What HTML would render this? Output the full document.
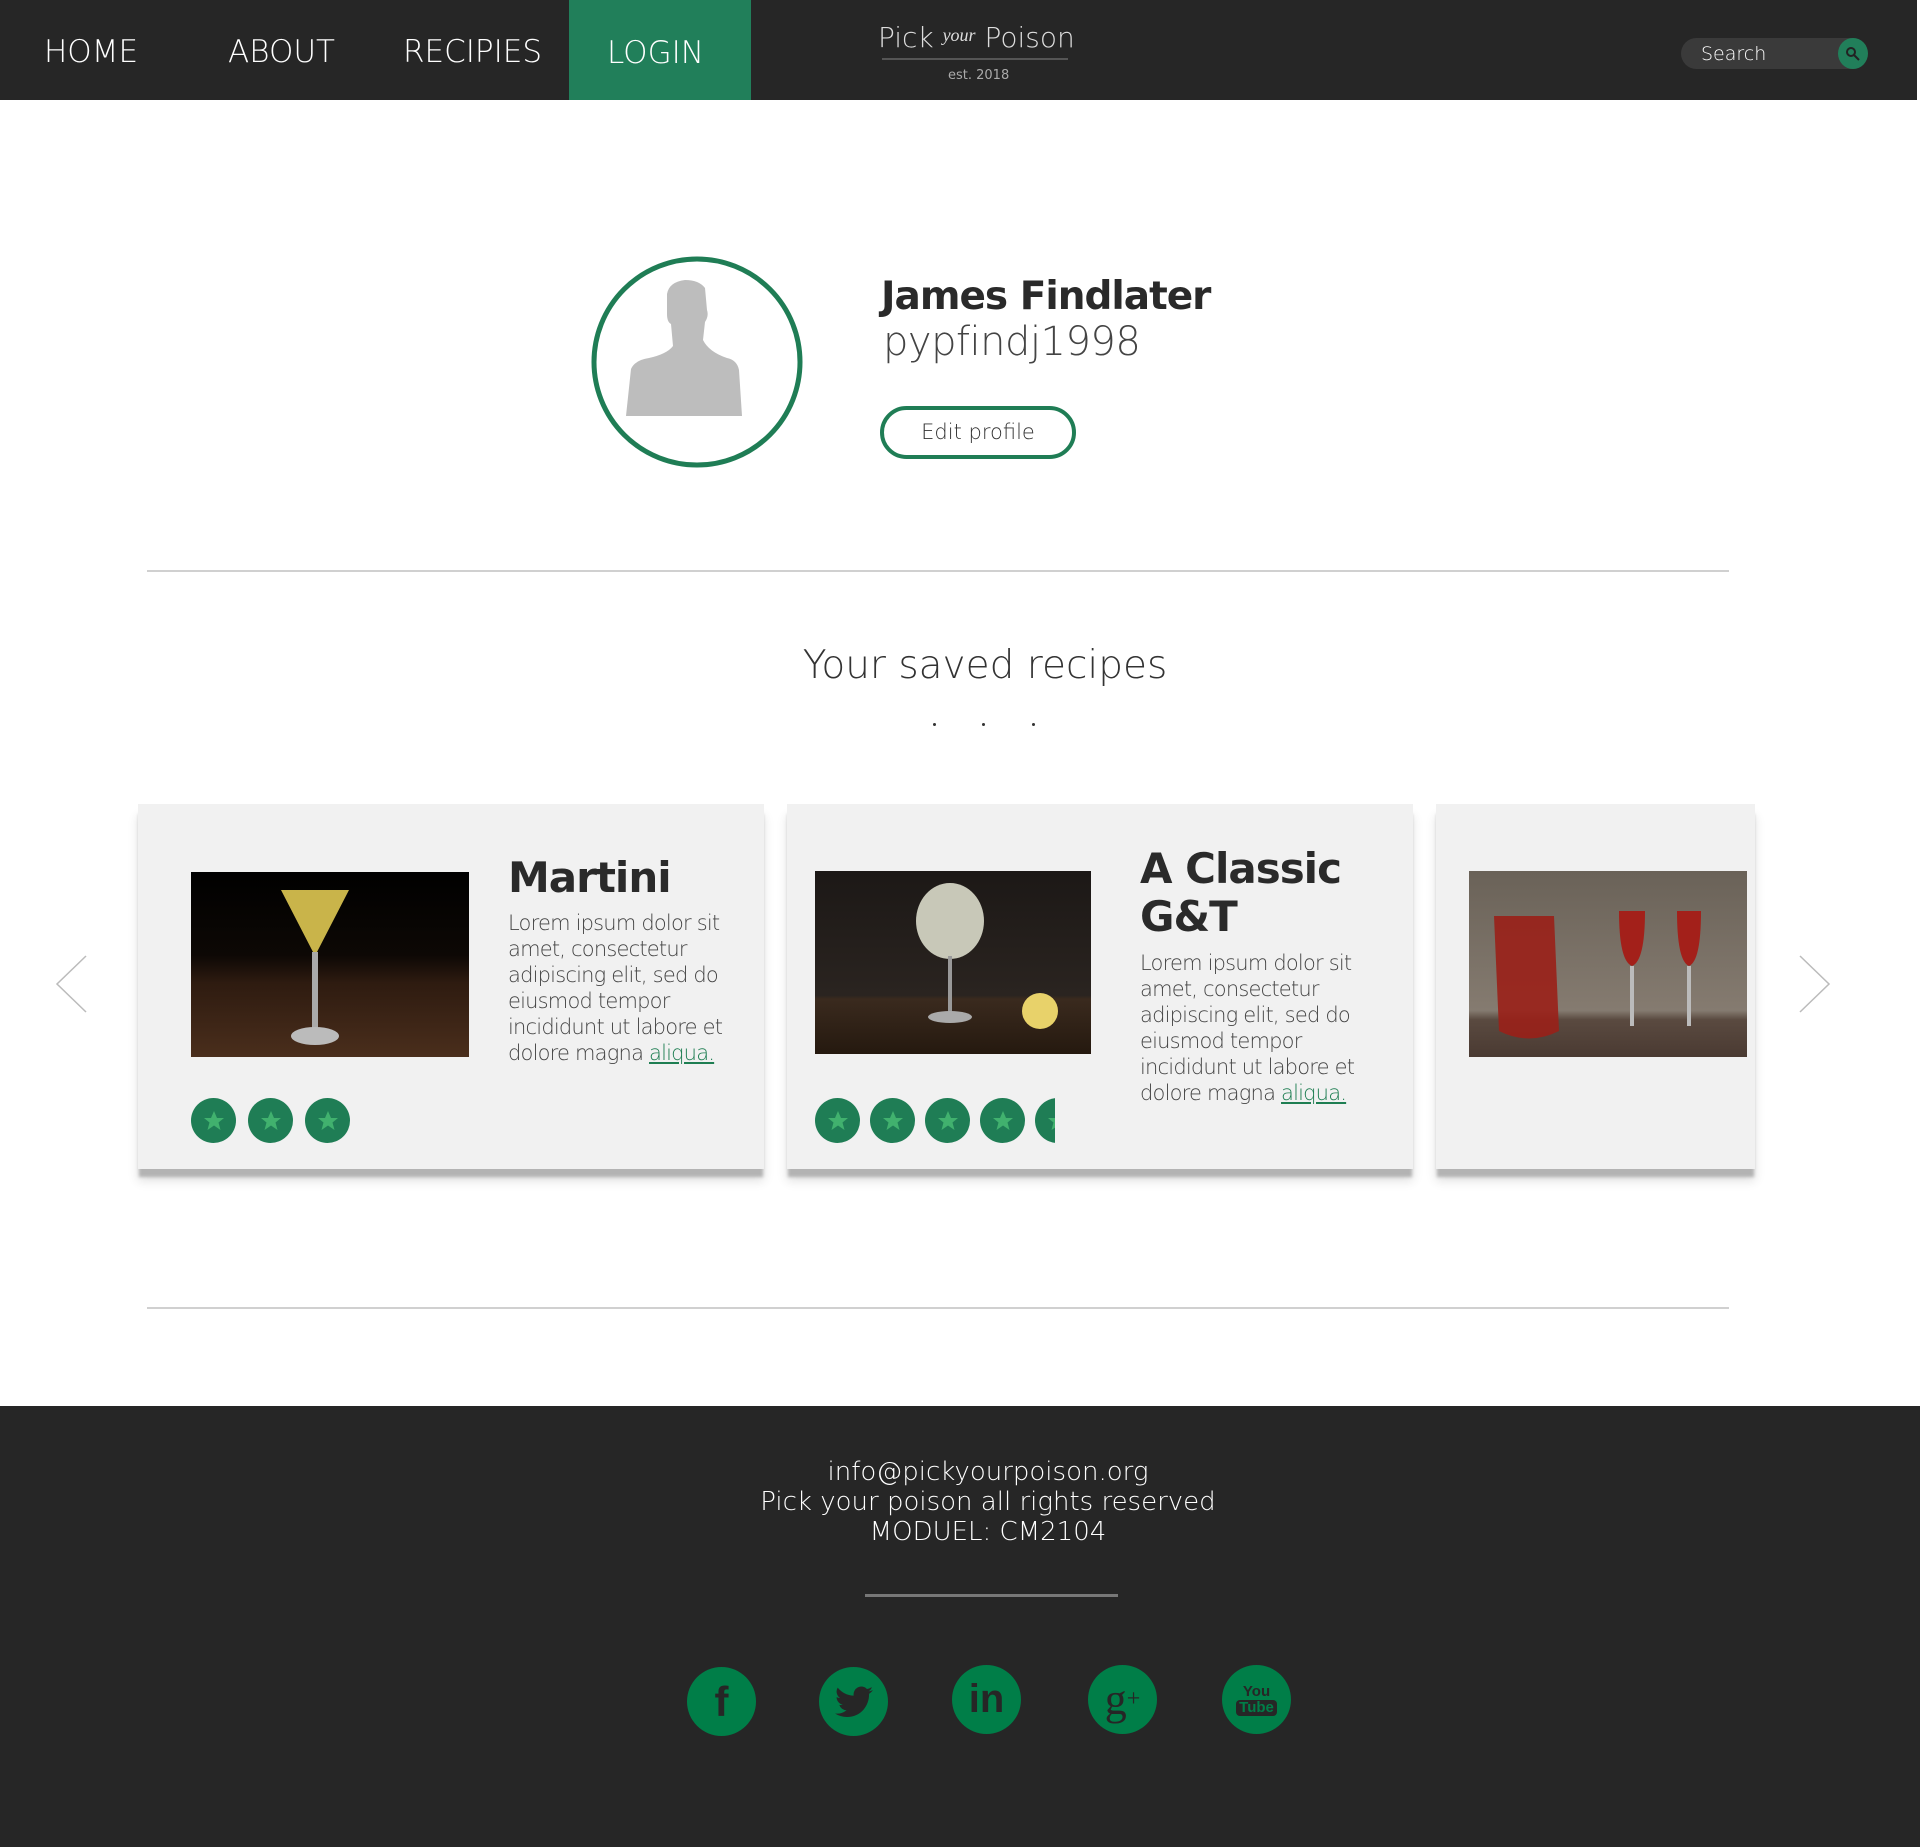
<!DOCTYPE html>
<html><head><meta charset="utf-8"><style>
*{margin:0;padding:0;box-sizing:border-box}
body{width:1920px;height:1847px;background:#fff;position:relative;overflow:hidden;font-family:"DejaVu Sans","Liberation Sans",sans-serif;color:#333}
.a{position:absolute}
.nav{left:0;top:0;width:1917px;height:100px;background:#262626}
.ni{top:34px;font-size:31px;color:#fff;font-weight:200;font-family:"DejaVu Sans","Liberation Sans",sans-serif}
.hr{height:2px;background:#d0d0d0;left:147px;width:1582px}
.card{background:#f1f1f1;box-shadow:0 9px 3px -1px #b3b3b3, 0 12px 10px rgba(0,0,0,.12)}
.t{font-size:21px;line-height:26px;color:#444;font-weight:200;letter-spacing:-0.8px}
.t u{color:#1e7e52;text-decoration:underline}
.h{font-weight:bold;font-size:42px;color:#2a2a2a;line-height:48px;letter-spacing:-1px}
.st{width:45px;height:45px;border-radius:50%;background:#1f7d55;display:flex;align-items:center;justify-content:center}
.so{width:69px;height:69px;border-radius:50%;background:#007e48;display:flex;align-items:center;justify-content:center;color:#262626;font-weight:bold}
</style></head><body>
<div class="a nav"></div>
<div class="a ni" style="left:44px">HOME</div>
<div class="a ni" style="left:228px">ABOUT</div>
<div class="a ni" style="left:403px">RECIPIES</div>
<div class="a" style="left:569px;top:0;width:182px;height:100px;background:#217f5a"></div>
<div class="a ni" style="left:607px;top:35px">LOGIN</div>
<div class="a" style="left:878px;top:21px;font-size:28px;color:#ddd;font-weight:200">Pick <i style="font-family:'Liberation Serif',serif;font-size:18px;position:relative;top:-6px">your</i> Poison</div>
<div class="a" style="left:882px;top:58px;width:186px;height:2px;background:#555"></div>
<div class="a" style="left:948px;top:68px;font-size:13px;color:#aaa">est. 2018</div>
<div class="a" style="left:1681px;top:38px;width:186px;height:31px;border-radius:16px;background:#3a3a3a"></div>
<div class="a" style="left:1701px;top:43px;font-size:19px;color:#fff;font-weight:200">Search</div>
<div class="a" style="left:1838px;top:38px;width:30px;height:31px;border-radius:50%;background:#217f5a"></div>
<svg class="a" style="left:1844px;top:45px" width="18" height="18" viewBox="0 0 18 18"><circle cx="7" cy="7" r="4" fill="none" stroke="#222" stroke-width="2"/><path d="M10 10l5 5" stroke="#222" stroke-width="2"/></svg>

<svg class="a" style="left:589px;top:254px" width="216" height="216" viewBox="0 0 216 216"><circle cx="108" cy="108" r="103" fill="#fff" stroke="#1f7d55" stroke-width="5"/><path d="M37 162 L42 115 Q46 106 60 104 Q78 100 84 92 L82 70 Q78 68 78 60 L78 40 Q80 28 96 26 Q110 26 116 34 L118 56 Q120 62 116 68 L114 86 Q120 98 138 104 Q148 106 150 116 L153 162 Z" fill="#bdbdbd"/></svg>
<div class="a h" style="left:881px;top:273px;font-size:39px;letter-spacing:-1px">James Findlater</div>
<div class="a" style="left:883px;top:319px;font-size:40px;font-weight:200;color:#444;letter-spacing:-0.5px">pypfindj1998</div>
<div class="a" style="left:880px;top:406px;width:196px;height:53px;border:4px solid #1f7d55;border-radius:27px;text-align:center;font-size:21px;line-height:44px;font-weight:200;color:#333">Edit profile</div>
<div class="a hr" style="top:570px"></div>
<div class="a" style="left:0;width:1970px;top:643px;text-align:center;font-size:39px;font-weight:200;color:#333">Your saved recipes</div>
<div class="a" style="left:933px;top:723px;width:3px;height:3px;background:#333;border-radius:50%"></div>
<div class="a" style="left:982px;top:723px;width:3px;height:3px;background:#333;border-radius:50%"></div>
<div class="a" style="left:1032px;top:723px;width:3px;height:3px;background:#333;border-radius:50%"></div>

<svg class="a" style="left:54px;top:954px" width="34" height="60"><path d="M32 2 L3 30 L32 58" fill="none" stroke="#bbb" stroke-width="1.5"/></svg>
<svg class="a" style="left:1798px;top:954px" width="34" height="60"><path d="M2 2 L31 30 L2 58" fill="none" stroke="#bbb" stroke-width="1.5"/></svg>

<div class="a card" style="left:138px;top:804px;width:626px;height:365px"></div>
<div class="a card" style="left:787px;top:804px;width:626px;height:365px"></div>
<div class="a card" style="left:1436px;top:804px;width:319px;height:365px"></div>

<svg class="a" style="left:191px;top:872px" width="278" height="185" viewBox="0 0 278 185"><defs><linearGradient id="g1" x1="0" y1="0" x2="0" y2="1"><stop offset="0" stop-color="#000"/><stop offset=".45" stop-color="#0d0805"/><stop offset=".6" stop-color="#2e1b10"/><stop offset="1" stop-color="#4a2e1c"/></linearGradient></defs><rect width="278" height="185" fill="url(#g1)"/><path d="M90 18 L158 18 L126 80 L122 80 Z" fill="#c9b44a"/><rect x="121" y="80" width="6" height="80" fill="#aaa"/><ellipse cx="124" cy="164" rx="24" ry="9" fill="#bbb"/></svg>
<div class="a h" style="left:508px;top:854px">Martini</div>
<div class="a t" style="left:508px;top:910px;width:240px">Lorem ipsum dolor sit amet, consectetur adipiscing elit, sed do eiusmod tempor incididunt ut labore et dolore magna <u>aliqua.</u></div>

<svg class="a" style="left:815px;top:871px" width="276" height="183" viewBox="0 0 276 183"><defs><linearGradient id="g2" x1="0" y1="0" x2="0" y2="1"><stop offset="0" stop-color="#1c1816"/><stop offset=".68" stop-color="#2a2420"/><stop offset=".7" stop-color="#3a2a1e"/><stop offset="1" stop-color="#25190f"/></linearGradient></defs><rect width="276" height="183" fill="url(#g2)"/><ellipse cx="135" cy="50" rx="34" ry="38" fill="#c8c8b8"/><rect x="133" y="85" width="4" height="60" fill="#999"/><ellipse cx="135" cy="146" rx="22" ry="6" fill="#aaa"/><circle cx="225" cy="140" r="18" fill="#e8d26a"/></svg>
<div class="a h" style="left:1140px;top:845px">A Classic<br>G&amp;T</div>
<div class="a t" style="left:1140px;top:950px;width:240px">Lorem ipsum dolor sit amet, consectetur adipiscing elit, sed do eiusmod tempor incididunt ut labore et dolore magna <u>aliqua.</u></div>

<svg class="a" style="left:1469px;top:871px" width="278" height="186" viewBox="0 0 278 186"><defs><linearGradient id="g3" x1="0" y1="0" x2="0" y2="1"><stop offset="0" stop-color="#6a6258"/><stop offset=".75" stop-color="#857b70"/><stop offset=".8" stop-color="#5a4a40"/><stop offset="1" stop-color="#4a3a32"/></linearGradient></defs><rect width="278" height="186" fill="url(#g3)"/><path d="M25 45 L85 45 L90 160 Q60 175 30 160 Z" fill="#9a2018" opacity=".9"/><path d="M150 40 Q150 90 163 95 Q176 90 176 40 Z" fill="#a3201a"/><rect x="161" y="95" width="4" height="60" fill="#bbb"/><path d="M208 40 Q208 90 220 95 Q232 90 232 40 Z" fill="#a3201a"/><rect x="218" y="95" width="4" height="60" fill="#bbb"/></svg>

<div class="a" style="left:191px;top:1098px;display:flex;gap:12px">
<div class="st"><svg width="24" height="24" viewBox="0 0 24 24"><path d="M12 2l3 7h7l-5.5 4.5 2 7.5-6.5-4.5-6.5 4.5 2-7.5L2 9h7z" fill="#41b16e"/></svg></div>
<div class="st"><svg width="24" height="24" viewBox="0 0 24 24"><path d="M12 2l3 7h7l-5.5 4.5 2 7.5-6.5-4.5-6.5 4.5 2-7.5L2 9h7z" fill="#41b16e"/></svg></div>
<div class="st"><svg width="24" height="24" viewBox="0 0 24 24"><path d="M12 2l3 7h7l-5.5 4.5 2 7.5-6.5-4.5-6.5 4.5 2-7.5L2 9h7z" fill="#41b16e"/></svg></div>
</div>
<div class="a" style="left:815px;top:1098px;width:240px;overflow:hidden;display:flex;gap:10px">
<div class="st" style="flex:none"><svg width="24" height="24" viewBox="0 0 24 24"><path d="M12 2l3 7h7l-5.5 4.5 2 7.5-6.5-4.5-6.5 4.5 2-7.5L2 9h7z" fill="#41b16e"/></svg></div>
<div class="st" style="flex:none"><svg width="24" height="24" viewBox="0 0 24 24"><path d="M12 2l3 7h7l-5.5 4.5 2 7.5-6.5-4.5-6.5 4.5 2-7.5L2 9h7z" fill="#41b16e"/></svg></div>
<div class="st" style="flex:none"><svg width="24" height="24" viewBox="0 0 24 24"><path d="M12 2l3 7h7l-5.5 4.5 2 7.5-6.5-4.5-6.5 4.5 2-7.5L2 9h7z" fill="#41b16e"/></svg></div>
<div class="st" style="flex:none"><svg width="24" height="24" viewBox="0 0 24 24"><path d="M12 2l3 7h7l-5.5 4.5 2 7.5-6.5-4.5-6.5 4.5 2-7.5L2 9h7z" fill="#41b16e"/></svg></div>
<div class="st" style="flex:none"><svg width="24" height="24" viewBox="0 0 24 24"><path d="M12 2l3 7h7l-5.5 4.5 2 7.5-6.5-4.5-6.5 4.5 2-7.5L2 9h7z" fill="#41b16e"/></svg></div>
</div>

<div class="a hr" style="top:1307px"></div>

<div class="a" style="left:0;top:1406px;width:1920px;height:441px;background:#262626"></div>
<div class="a" style="left:0;top:1457px;width:1976px;text-align:center;color:#fff;font-size:26px;line-height:30px;font-weight:200">info@pickyourpoison.org<br>Pick your poison all rights reserved<br>MODUEL: CM2104</div>
<div class="a" style="left:865px;top:1594px;width:253px;height:3px;background:#777"></div>

<div class="a so" style="left:687px;top:1667px;font-size:42px;font-family:'Liberation Sans',sans-serif">f</div>
<div class="a so" style="left:819px;top:1667px"><svg width="38" height="32" viewBox="0 0 24 20"><path d="M24 2.5a10 10 0 0 1-2.8.8A5 5 0 0 0 23.3.6a10 10 0 0 1-3.1 1.2A4.9 4.9 0 0 0 11.8 6 14 14 0 0 1 1.7.9a4.9 4.9 0 0 0 1.5 6.6A4.9 4.9 0 0 1 1 6.9a4.9 4.9 0 0 0 3.9 4.8 5 5 0 0 1-2.2.1 4.9 4.9 0 0 0 4.6 3.4A9.9 9.9 0 0 1 0 17.3 14 14 0 0 0 7.5 19.5c9.1 0 14-7.5 14-14v-.6A10 10 0 0 0 24 2.5z" fill="#262626"/></svg></div>
<div class="a so" style="left:952px;top:1665px;font-size:40px;font-family:'Liberation Sans',sans-serif">in</div>
<div class="a so" style="left:1088px;top:1665px;font-size:44px;font-family:'Liberation Serif',serif;font-weight:normal">g<sup style="font-size:24px">+</sup></div>
<div class="a so" style="left:1222px;top:1665px;flex-direction:column;font-size:15px;font-family:'Liberation Sans',sans-serif;line-height:16px"><span>You</span><span style="background:#262626;color:#007e48;border-radius:4px;padding:0 3px">Tube</span></div>
</body></html>
